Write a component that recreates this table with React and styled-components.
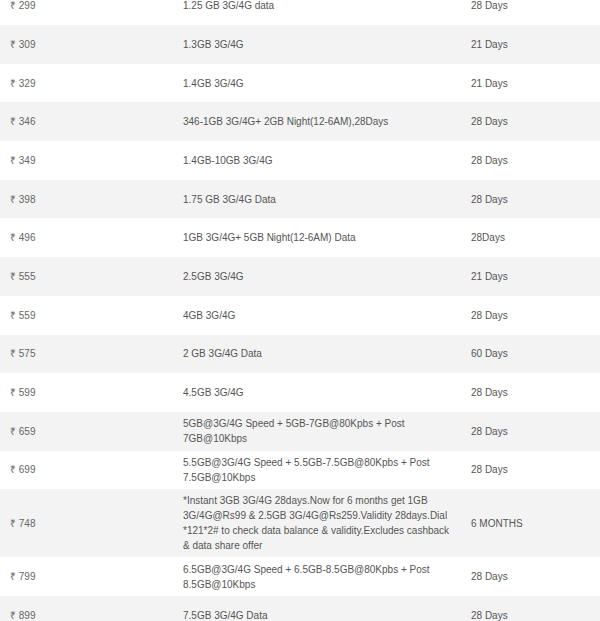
import styled, { createGlobalStyle } from "styled-components";

const GlobalStyle = createGlobalStyle`
    html, body {
        margin: 0;
        padding: 0;
        background: #fff;
    }
    body {
        font-family: "Liberation Sans", Arial, sans-serif;
        overflow: hidden;
    }
`;

const plans = [
    { price: 299, desc: "1.25 GB 3G/4G data", validity: "28 Days" },
    { price: 309, desc: "1.3GB 3G/4G", validity: "21 Days" },
    { price: 329, desc: "1.4GB 3G/4G", validity: "21 Days" },
    { price: 346, desc: "346-1GB 3G/4G+ 2GB Night(12-6AM),28Days", validity: "28 Days" },
    { price: 349, desc: "1.4GB-10GB 3G/4G", validity: "28 Days" },
    { price: 398, desc: "1.75 GB 3G/4G Data", validity: "28 Days" },
    { price: 496, desc: "1GB 3G/4G+ 5GB Night(12-6AM) Data", validity: "28Days" },
    { price: 555, desc: "2.5GB 3G/4G", validity: "21 Days" },
    { price: 559, desc: "4GB 3G/4G", validity: "28 Days" },
    { price: 575, desc: "2 GB 3G/4G Data", validity: "60 Days" },
    { price: 599, desc: "4.5GB 3G/4G", validity: "28 Days" },
    { price: 659, desc: "5GB@3G/4G Speed + 5GB-7GB@80Kpbs + Post 7GB@10Kbps", validity: "28 Days" },
    { price: 699, desc: "5.5GB@3G/4G Speed + 5.5GB-7.5GB@80Kpbs + Post 7.5GB@10Kbps", validity: "28 Days" },
    {
        price: 748,
        desc: "*Instant 3GB 3G/4G 28days.Now for 6 months get 1GB 3G/4G@Rs99 & 2.5GB 3G/4G@Rs259.Validity 28days.Dial *121*2# to check data balance & validity.Excludes cashback & data share offer",
        validity: "6 MONTHS",
    },
    { price: 799, desc: "6.5GB@3G/4G Speed + 6.5GB-8.5GB@80Kpbs + Post 8.5GB@10Kbps", validity: "28 Days" },
    { price: 899, desc: "7.5GB 3G/4G Data", validity: "28 Days" },
];

export default function App() {
    return (
        <>
            <GlobalStyle />
            <PlanTable>
                {plans.map((plan, i) => (
                    <PlanRow key={plan.price} $striped={i % 2 === 1}>
                        <PriceCell>₹ {plan.price}</PriceCell>
                        <DescCell>{plan.desc}</DescCell>
                        <ValidityCell>{plan.validity}</ValidityCell>
                    </PlanRow>
                ))}
            </PlanTable>
        </>
    );
}

const PlanTable = styled.div`
    width: 600px;
    margin-top: -13.7px;
    font-size: 10px;
    line-height: 15px;
    color: #555;
`;

const PlanRow = styled.div`
    display: grid;
    grid-template-columns: 183px 288px 1fr;
    align-items: center;
    min-height: 38.7px;
    padding: 4px 0;
    box-sizing: border-box;
    background: ${(p) => (p.$striped ? "#f3f3f3" : "#fff")};
`;

const PriceCell = styled.div`
    padding-left: 10px;
    color: #666;
`;

const DescCell = styled.div`
    padding-right: 20px;
`;

const ValidityCell = styled.div``;
